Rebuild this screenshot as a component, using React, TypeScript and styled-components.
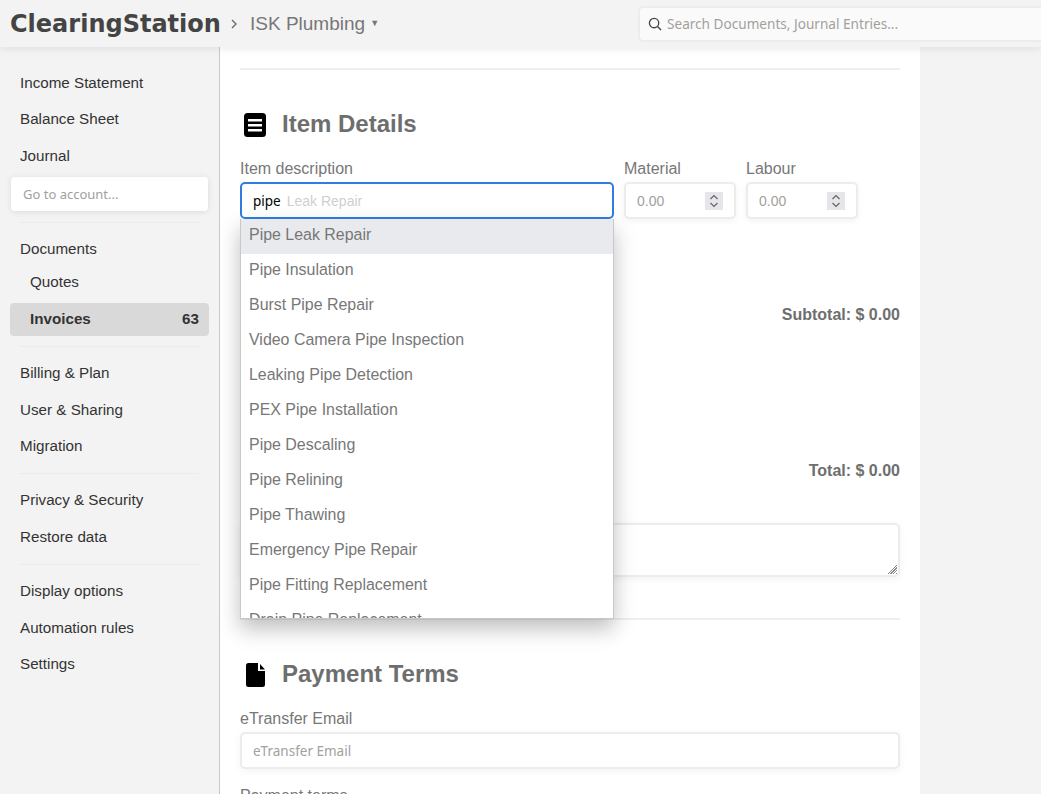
import { FunctionComponent } from "react";
import styled, { createGlobalStyle } from "styled-components";

const GlobalStyle = createGlobalStyle`
  html, body {
    margin: 0;
    height: 100%;
    overflow: hidden;
    background: #f3f3f3;
    font-family: "Liberation Sans", Arial, sans-serif;
  }
  * { box-sizing: border-box; }
`;

const inputFont = `"Noto Sans", "Open Sans", sans-serif`;

const Page = styled.div`
  width: 1041px;
  height: 794px;
  overflow: hidden;
  display: flex;
  flex-direction: column;
  position: relative;
`;

const TopBar = styled.header`
  flex: none;
  height: 47px;
  display: flex;
  align-items: center;
  padding-left: 10px;
  background: #f3f3f3;
  box-shadow: 0 2px 8px rgba(0, 0, 0, 0.08);
  position: relative;
  z-index: 2;
`;

const Logo = styled.div`
  flex: none;
  font-family: "DejaVu Sans", sans-serif;
  font-weight: 700;
  font-size: 24px;
  color: #444;
  width: 220px;
  white-space: nowrap;
`;

const CrumbChevron = styled.span`
  flex: none;
  width: 8px;
  display: flex;
`;

const Crumb = styled.div`
  flex: none;
  display: flex;
  align-items: center;
  color: #777;
  font-size: 19px;
  margin-left: 12px;
  width: 388px;
`;

const CrumbCaret = styled.span`
  font-size: 9px;
  margin-left: 5px;
  margin-top: -2px;
`;

const SearchBox = styled.div`
  flex: none;
  width: 440px;
  height: 36px;
  display: flex;
  align-items: center;
  gap: 5px;
  padding-left: 8px;
  background: #fafafa;
  border: 2px solid #ececec;
  border-radius: 5px;
  font-family: ${inputFont};
  font-size: 13.6px;
  color: #a3a09c;
`;

const Body = styled.div`
  flex: 1;
  min-height: 0;
  display: flex;
`;

const Sidebar = styled.nav`
  flex: none;
  width: 220px;
  padding: 17px 10px 0;
  border-right: 1px solid #c8c8c8;
  background: #f3f3f3;
`;

const NavItem = styled.div<{ $sub?: boolean; $h?: number }>`
  height: ${(p) => p.$h ?? 36.5}px;
  display: flex;
  align-items: center;
  padding-left: ${(p) => (p.$sub ? 20 : 10)}px;
  font-size: 15.2px;
  color: #333;
`;

const ActiveItem = styled.div`
  height: 33px;
  margin-top: 7.5px;
  display: flex;
  align-items: center;
  justify-content: space-between;
  padding: 0 10px 3px 20px;
  background: #d9d9d9;
  border-radius: 4px;
  font-size: 15.2px;
  font-weight: 700;
  color: #333;
`;

const AccountInput = styled.input`
  display: block;
  width: 197px;
  height: 34px;
  margin: 3.5px 0 0 1px;
  padding: 0 12px;
  border: none;
  border-radius: 4px;
  background: #fff;
  box-shadow: 0 1px 6px rgba(0, 0, 0, 0.1);
  font-family: ${inputFont};
  font-size: 13px;
  &::placeholder { color: #a3a09c; opacity: 1; }
`;

const NavDivider = styled.div<{ $top: number; $bottom?: number }>`
  height: 1px;
  margin: ${(p) => p.$top}px 10px ${(p) => p.$bottom ?? 7.35}px;
  background: #ebebeb;
`;

const Main = styled.main`
  flex: none;
  width: 700px;
  padding: 21px 20px 0;
  background: #fff;
  overflow: hidden;
  position: relative;
`;

const Rule = styled.div<{ $top?: number }>`
  height: 2px;
  margin-top: ${(p) => p.$top ?? 0}px;
  background: #eeeeee;
`;

const SectionTitle = styled.h2<{ $top: number }>`
  display: flex;
  align-items: center;
  gap: 16px;
  height: 26px;
  margin: ${(p) => p.$top}px 0 0;
  padding-left: 4px;
  font-size: 24px;
  font-weight: 700;
  color: #6e6e6e;
`;

const TitleIcon = styled.span`
  flex: none;
  width: 22px;
  margin-top: 2px;
  display: flex;
  justify-content: center;
`;

const FieldRow = styled.div`
  display: flex;
  gap: 10px;
  margin-top: 22px;
`;

const Field = styled.div<{ $w: number }>`
  width: ${(p) => p.$w}px;
`;

const Label = styled.label<{ $top?: number }>`
  display: block;
  height: 23px;
  margin-top: ${(p) => p.$top ?? 0}px;
  font-size: 16px;
  line-height: 20px;
  color: #777;
`;

const DescriptionBox = styled.div`
  height: 37px;
  display: flex;
  align-items: center;
  padding-left: 11px;
  background: #fff;
  border: 2px solid #2f7de1;
  border-radius: 5px;
  font-size: 14px;
`;

const Typed = styled.span`
  font-family: ${inputFont};
  font-size: 13.5px;
  color: #000;
  margin-right: 6px;
`;

const Ghost = styled.span`
  color: #cfcfcf;
`;

const NumberBox = styled.div`
  height: 37px;
  display: flex;
  align-items: center;
  justify-content: space-between;
  padding: 0 11px;
  background: #fff;
  border: 2px solid #ececec;
  border-radius: 5px;
  box-shadow: 0 2px 6px rgba(0, 0, 0, 0.05);
  font-size: 14px;
  color: #a3a09c;
`;

const Spinner = styled.span`
  width: 18px;
  height: 18px;
  display: flex;
  background: #e6e6ea;
`;

const TotalLine = styled.div<{ $top: number }>`
  margin-top: ${(p) => p.$top}px;
  height: 20px;
  line-height: 20px;
  text-align: right;
  font-size: 16px;
  font-weight: 700;
  color: #6e6e6e;
`;

const Notes = styled.textarea`
  display: block;
  width: 100%;
  height: 54px;
  margin-top: 42px;
  background: #fff;
  border: 2px solid #ececec;
  border-radius: 5px;
  box-shadow: 0 2px 8px rgba(0, 0, 0, 0.05);
  outline: none;
  &::-webkit-resizer {
    background:
      linear-gradient(135deg, #fff 50%, transparent 50%) right 1px bottom 1px / 10px 10px no-repeat,
      repeating-linear-gradient(135deg, #fff 0 1px, #888 1px 2px) right 1px bottom 1px / 10px 10px no-repeat;
  }
`;

const TextInput = styled.input`
  display: block;
  width: 100%;
  height: 37px;
  padding: 0 11px;
  background: #fff;
  border: 2px solid #ececec;
  border-radius: 5px;
  box-shadow: 0 2px 8px rgba(0, 0, 0, 0.05);
  font-family: ${inputFont};
  font-size: 13.5px;
  &::placeholder { color: #a3a09c; opacity: 1; }
`;

const Dropdown = styled.ul`
  position: absolute;
  left: 20px;
  top: 172px;
  width: 374px;
  height: 400px;
  margin: 0;
  padding: 0;
  list-style: none;
  overflow: hidden;
  background: #fff;
  border: 1px solid #c8c8c8;
  border-top: none;
  box-shadow: 0 10px 20px rgba(0, 0, 0, 0.25);
`;

const Option = styled.li<{ $active?: boolean }>`
  height: 35px;
  line-height: 31px;
  padding-left: 8px;
  font-size: 15.95px;
  color: #777;
  background: ${(p) => (p.$active ? "#e8eaed" : "#fff")};
`;

const options = [
  "Pipe Leak Repair",
  "Pipe Insulation",
  "Burst Pipe Repair",
  "Video Camera Pipe Inspection",
  "Leaking Pipe Detection",
  "PEX Pipe Installation",
  "Pipe Descaling",
  "Pipe Relining",
  "Pipe Thawing",
  "Emergency Pipe Repair",
  "Pipe Fitting Replacement",
  "Drain Pipe Replacement",
];

const SearchIcon = () => (
  <svg width="14" height="14" viewBox="0 0 15 15" fill="none" stroke="#444" strokeWidth="1.4">
    <circle cx="6.5" cy="6.5" r="5" />
    <path d="M10.2 10.2 14 14" />
  </svg>
);

const ChevronIcon = () => (
  <svg width="8" height="10" viewBox="0 0 8 10" fill="none" stroke="#666" strokeWidth="1.3">
    <path d="M2 1l4 4-4 4" />
  </svg>
);

const ListIcon = () => (
  <svg width="22" height="24" viewBox="0 0 22 24">
    <rect width="22" height="24" rx="3.5" fill="#000" />
    <path d="M4 6h14v2.600H4zM4 11h14v2.600H4zM4 16h14v2.600H4z" fill="#fff" />
  </svg>
);

const FileIcon = () => (
  <svg width="19" height="24" viewBox="0 0 19 24">
    <path d="M2.5 0H12v8h7v13.500a2.500 2.500 0 0 1-2.500 2.500h-14A2.500 2.500 0 0 1 0 21.500v-19A2.500 2.500 0 0 1 2.500 0zM14 1l5 5.500h-5z" fill="#000" />
  </svg>
);

const SpinIcon = () => (
  <svg width="18" height="18" viewBox="0 0 18 18" fill="none" stroke="#666" strokeWidth="1.2">
    <path d="M5.500 7 9 3.500 12.500 7M5.500 11 9 14.500 12.500 11" />
  </svg>
);

const App: FunctionComponent = () => {
  return (
    <Page>
      <GlobalStyle />
      <TopBar>
        <Logo>ClearingStation</Logo>
        <CrumbChevron><ChevronIcon /></CrumbChevron>
        <Crumb>
          ISK Plumbing<CrumbCaret>▼</CrumbCaret>
        </Crumb>
        <SearchBox>
          <SearchIcon />
          Search Documents, Journal Entries...
        </SearchBox>
      </TopBar>
      <Body>
        <Sidebar>
          <NavItem>Income Statement</NavItem>
          <NavItem>Balance Sheet</NavItem>
          <NavItem>Journal</NavItem>
          <AccountInput placeholder="Go to account..." readOnly />
          <NavDivider $top={11} $bottom={7} />
          <NavItem>Documents</NavItem>
          <NavItem $sub $h={29}>Quotes</NavItem>
          <ActiveItem>
            Invoices<span>63</span>
          </ActiveItem>
          <NavDivider $top={10} />
          <NavItem>Billing &amp; Plan</NavItem>
          <NavItem>User &amp; Sharing</NavItem>
          <NavItem>Migration</NavItem>
          <NavDivider $top={9.15} />
          <NavItem>Privacy &amp; Security</NavItem>
          <NavItem>Restore data</NavItem>
          <NavDivider $top={9.65} />
          <NavItem>Display options</NavItem>
          <NavItem>Automation rules</NavItem>
          <NavItem>Settings</NavItem>
        </Sidebar>
        <Main>
          <Rule />
          <SectionTitle $top={41}>
            <TitleIcon><ListIcon /></TitleIcon>
            Item Details
          </SectionTitle>
          <FieldRow>
            <Field $w={374}>
              <Label>Item description</Label>
              <DescriptionBox>
                <Typed>pipe</Typed>
                <Ghost>Leak Repair</Ghost>
              </DescriptionBox>
            </Field>
            <Field $w={112}>
              <Label>Material</Label>
              <NumberBox>
                0.00
                <Spinner><SpinIcon /></Spinner>
              </NumberBox>
            </Field>
            <Field $w={112}>
              <Label>Labour</Label>
              <NumberBox>
                0.00
                <Spinner><SpinIcon /></Spinner>
              </NumberBox>
            </Field>
          </FieldRow>
          <TotalLine $top={86}>Subtotal: $ 0.00</TotalLine>
          <TotalLine $top={136}>Total: $ 0.00</TotalLine>
          <Notes readOnly />
          <Rule $top={41} />
          <SectionTitle $top={41}>
            <TitleIcon><FileIcon /></TitleIcon>
            Payment Terms
          </SectionTitle>
          <Label as="div" $top={22}>eTransfer Email</Label>
          <TextInput placeholder="eTransfer Email" readOnly />
          <Label as="div" $top={17}>Payment terms</Label>
          <Dropdown>
            {options.map((option, i) => (
              <Option key={option} $active={i === 0}>{option}</Option>
            ))}
          </Dropdown>
        </Main>
      </Body>
    </Page>
  );
};

export default App;
